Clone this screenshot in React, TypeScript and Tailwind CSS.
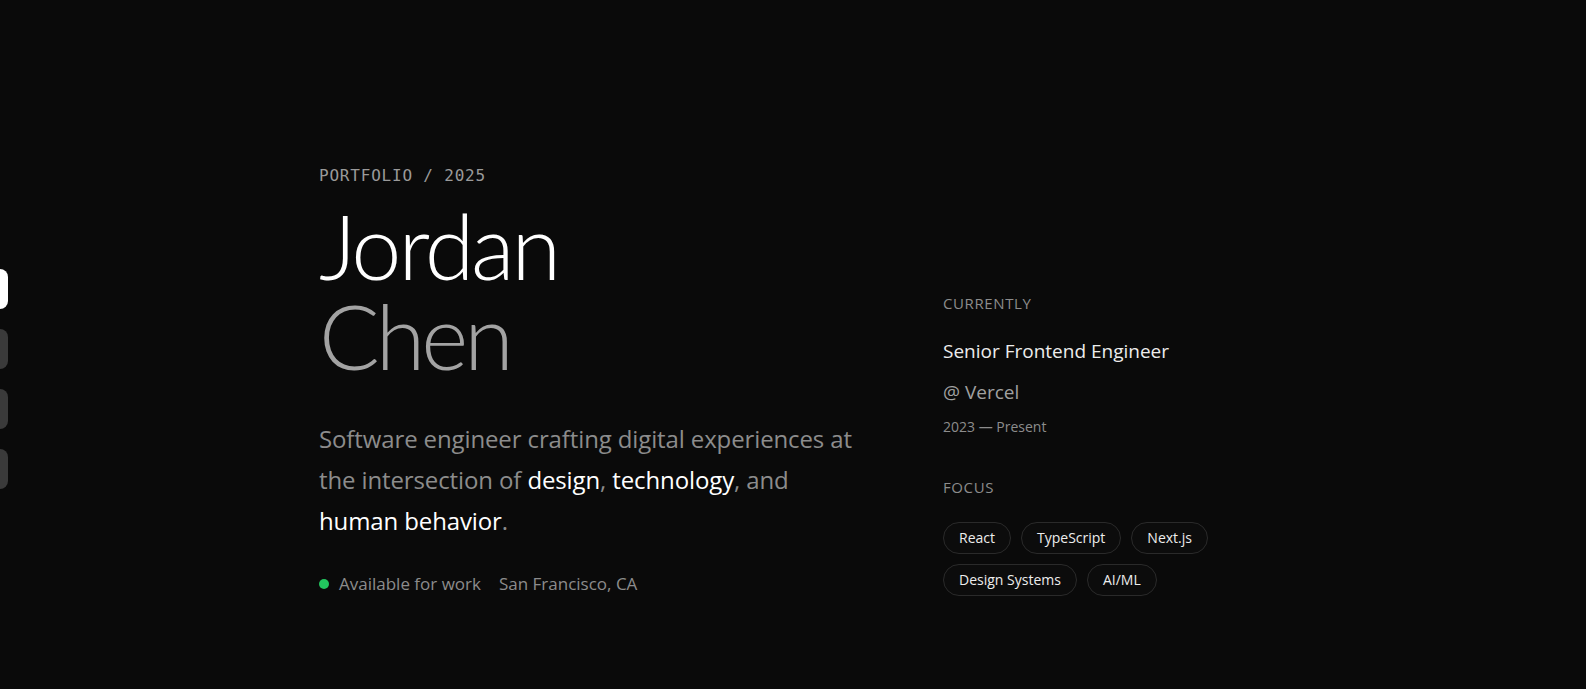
import React from "react";

const chipsRow1 = ["React", "TypeScript", "Next.js"];
const chipsRow2 = ["Design Systems", "AI/ML"];

function Chip({ label }: { label: string }) {
  return (
    <span className="h-8 px-[15px] inline-flex items-center rounded-full border border-[#2a2a2a] bg-[#0c0c0c] text-[14px] leading-5 text-[#ededed] whitespace-nowrap">
      {label}
    </span>
  );
}

export default function App() {
  return (
    <div className="min-h-screen w-full bg-[#0a0a0a] font-['Open_Sans',sans-serif] text-white relative overflow-hidden">
      <nav className="fixed left-0 top-[269px] flex flex-col gap-5">
        <span className="block w-2 h-10 rounded-r-full bg-white" />
        <span className="block w-2 h-10 rounded-r-full bg-[#3a3a3a]" />
        <span className="block w-2 h-10 rounded-r-full bg-[#3a3a3a]" />
        <span className="block w-2 h-10 rounded-r-full bg-[#3a3a3a]" />
      </nav>

      <main className="mx-auto w-[948px] pt-[164px] pb-20 flex items-start">
        <section className="w-[624px] shrink-0">
          <div className="font-['DejaVu_Sans_Mono',monospace] text-base leading-6 tracking-wider text-[#9a9a9a]">
            PORTFOLIO / 2025
          </div>
          <h1 className="mt-3 font-['Lato',sans-serif] font-light text-[90px] leading-[90px] tracking-[-0.035em]">
            <span className="block text-white">Jordan</span>
            <span className="block text-[#a3a3a3] tracking-[-0.045em]">Chen</span>
          </h1>
          <p className="mt-[38px] text-2xl leading-[41px] tracking-[-0.005em] text-[#8c8c8c] whitespace-nowrap">
            Software engineer crafting digital experiences at
            <br />
            the intersection of <span className="text-white">design</span>,{" "}
            <span className="text-white">technology</span>, and
            <br />
            <span className="text-white">human behavior</span>.
          </p>
          <div className="mt-[29px] flex items-center text-[17px] leading-7 text-[#8c8c8c]">
            <span className="w-2.5 h-2.5 rounded-full bg-[#22c55e]" />
            <span className="ml-2.5">Available for work</span>
            <span className="ml-[18px]">San Francisco, CA</span>
          </div>
        </section>

        <aside className="flex-1 mt-[129px]">
          <div className="text-[15px] leading-5 tracking-[0.04em] text-[#8c8c8c]">CURRENTLY</div>
          <div className="mt-[24px] text-[19px] leading-7 text-[#ededed]">Senior Frontend Engineer</div>
          <div className="mt-[13px] text-[19px] leading-7 text-[#a0a0a0]">@ Vercel</div>
          <div className="mt-[11px] text-sm leading-5 text-[#8c8c8c]">2023 — Present</div>
          <div className="mt-[40px] text-[15px] leading-5 tracking-[0.04em] text-[#8c8c8c]">FOCUS</div>
          <div className="mt-[25px] flex flex-col gap-2.5">
            <div className="flex gap-2.5">
              {chipsRow1.map((c) => (
                <Chip key={c} label={c} />
              ))}
            </div>
            <div className="flex gap-2.5">
              {chipsRow2.map((c) => (
                <Chip key={c} label={c} />
              ))}
            </div>
          </div>
        </aside>
      </main>
    </div>
  );
}
